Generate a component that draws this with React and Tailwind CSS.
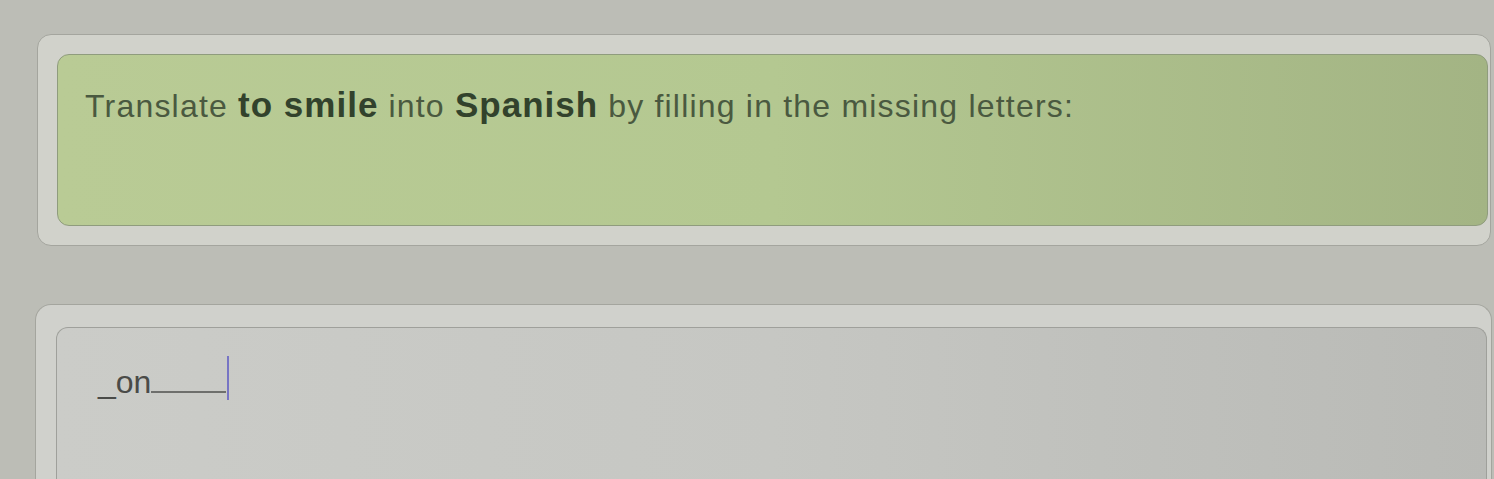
export default function App() {
  return (
    <div
      className="w-[1494px] h-[479px] overflow-hidden bg-[#bcbdb6] pt-[34px]"
      style={{ fontFamily: '"Liberation Sans", Arial, sans-serif' }}
    >
      <div className="ml-[37px] mr-[3px] h-[212px] rounded-[14px] border border-[#a4a59e] bg-[#d1d2cb] pt-[19px] pl-[19px] pr-[2px]">
        <div className="h-[172px] rounded-[12px] border border-[#8f9c7d] bg-gradient-to-r from-[#b9cb95] via-[#b4c891] to-[#a3b484] pl-[27px] pt-[30px]">
          <p className="text-[32px] leading-[40px] text-[#4a5940] tracking-[1.2px] whitespace-nowrap">
            Translate <span className="text-[35px] font-bold text-[#32422c] tracking-[1px]">to smile</span> into{" "}
            <span className="text-[35px] font-bold text-[#32422c] tracking-[1px]">Spanish</span> by filling in the missing letters:
          </p>
        </div>
      </div>
      <div className="mt-[58px] ml-[35px] mr-[2px] h-[200px] rounded-t-[16px] border border-b-0 border-[#a4a59e] bg-[#d0d1cc] pt-[22px] pl-[20px] pr-[4px]">
        <div className="h-[200px] rounded-t-[12px] border border-b-0 border-[#9fa09b] bg-gradient-to-r from-[#cbccc8] via-[#c6c7c3] to-[#b9bab6] pl-[41px] pt-[26px]">
          <div className="flex items-end h-[48px]">
            <span className="text-[32px] leading-[40px] text-[#4a4b48]">_on</span>
            <span className="mb-[9px] w-[75px] border-b-2 border-[#6e6f6c]"></span>
            <span className="ml-[1px] mb-[2px] w-[2px] h-[44px] bg-[#7775c4]"></span>
          </div>
        </div>
      </div>
    </div>
  );
}
